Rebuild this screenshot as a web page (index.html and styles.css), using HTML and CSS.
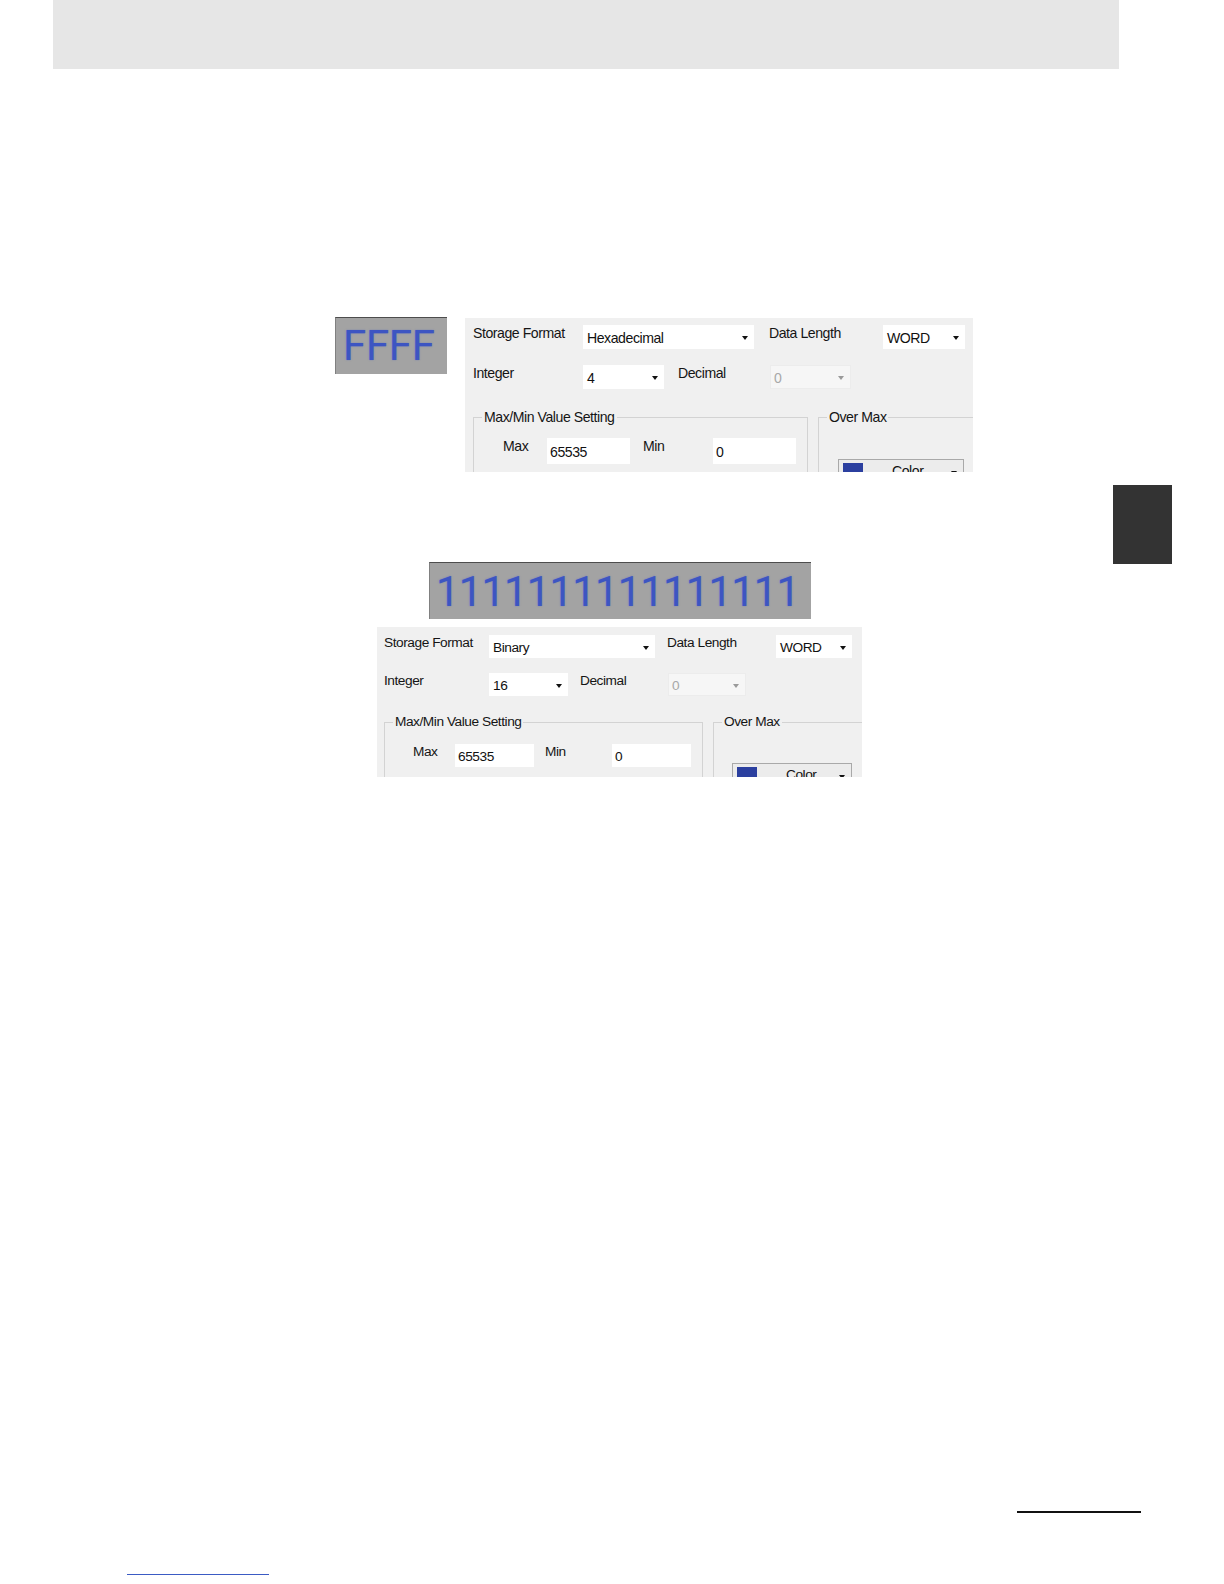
FILE: index.html
```html
<!DOCTYPE html>
<html>
<head>
<meta charset="utf-8">
<link rel="stylesheet" href="styles.css">
</head>
<body>
<div class="page">
  <div class="header"></div>

  <div class="fig fig1">
    <div class="display disp-hex">FFFF</div>
    <div class="panel p1">
      <div class="row r1">
        <span class="lbl la">Storage Format</span>
        <div class="sel sa"><span>Hexadecimal</span><i class="caret"></i></div>
        <span class="lbl lc">Data Length</span>
        <div class="sel sd"><span>WORD</span><i class="caret"></i></div>
      </div>
      <div class="row r2">
        <span class="lbl la">Integer</span>
        <div class="sel si"><span>4</span><i class="caret"></i></div>
        <span class="lbl ld">Decimal</span>
        <div class="sel sdec disabled"><span>0</span><i class="caret"></i></div>
      </div>
      <div class="groups">
        <fieldset class="grp gmm">
          <legend>Max/Min Value Setting</legend>
          <div class="inrow">
            <span class="lbl lmax">Max</span>
            <div class="inp">65535</div>
            <span class="lbl lmin">Min</span>
            <div class="inp">0</div>
          </div>
        </fieldset>
        <fieldset class="grp gov">
          <legend>Over Max</legend>
          <div class="ovbody">
            <div class="cbtn"><i class="sw"></i><span class="ctext">Color</span><i class="caret"></i></div>
          </div>
        </fieldset>
      </div>
    </div>
  </div>

  <div class="fig fig2">
    <div class="display disp-bin">1111111111111111</div>
    <div class="panel p2">
      <div class="row r1">
        <span class="lbl la">Storage Format</span>
        <div class="sel sa"><span>Binary</span><i class="caret"></i></div>
        <span class="lbl lc">Data Length</span>
        <div class="sel sd"><span>WORD</span><i class="caret"></i></div>
      </div>
      <div class="row r2">
        <span class="lbl la">Integer</span>
        <div class="sel si"><span>16</span><i class="caret"></i></div>
        <span class="lbl ld">Decimal</span>
        <div class="sel sdec disabled"><span>0</span><i class="caret"></i></div>
      </div>
      <div class="groups">
        <fieldset class="grp gmm">
          <legend>Max/Min Value Setting</legend>
          <div class="inrow">
            <span class="lbl lmax">Max</span>
            <div class="inp">65535</div>
            <span class="lbl lmin">Min</span>
            <div class="inp">0</div>
          </div>
        </fieldset>
        <fieldset class="grp gov">
          <legend>Over Max</legend>
          <div class="ovbody">
            <div class="cbtn"><i class="sw"></i><span class="ctext">Color</span><i class="caret"></i></div>
          </div>
        </fieldset>
      </div>
    </div>
  </div>

  <div class="foot-rule"></div>
  <div class="foot-link"></div>

  <div class="side-tab"></div>
</div>
</body>
</html>
```

FILE: styles.css
```css
* { box-sizing: border-box; }
html, body { margin: 0; padding: 0; background: #fff; }
body { font-family: "Liberation Sans", Arial, sans-serif; color: #111; }

.page { position: relative; width: 1224px; height: 1584px; overflow: hidden; }

.header {
  margin-left: 53px;
  width: 1066px;
  height: 69px;
  background: #e6e6e6;
}

.fig { display: flex; align-items: flex-start; }
.fig1 { margin-top: 248px; padding-left: 335px; gap: 18px; }
.fig2 { margin-top: 90px; flex-direction: column; align-items: flex-start; }

.display {
  background: #a3a3a3;
  border-top: 1px solid #4d4d4d;
  border-left: 1px solid #808080;
  color: #3d55c2;
  font-family: Roboto, "Liberation Sans", Arial, sans-serif;
  white-space: nowrap;
  text-shadow: 0 0 1.5px rgba(60, 85, 200, 0.55);
}
.disp-hex {
  width: 112px; height: 57px;
  font-size: 42px; line-height: 56px;
  letter-spacing: -0.3px;
  padding-left: 7px;
}
.disp-bin {
  margin-left: 429px;
  width: 382px; height: 57px;
  font-size: 42px; line-height: 57px;
  letter-spacing: -0.9px;
  padding-left: 6px;
}

/* ---------- dialog panel ---------- */
.panel {
  background: #f0f0f0;
  overflow: hidden;
  font-size: var(--fs);
  letter-spacing: var(--ls);
  padding-left: var(--pad);
  padding-top: var(--pt);
}
.p1 {
  margin-top: 1px;
  width: 508px; height: 154px;
  --fs: 14.1px; --ls: -0.45px; --pad: 8px; --pt: 7px;
  --la: 110px; --sa: 171px; --g: 15px; --lc: 114px; --sd: 82px;
  --si: 81px; --g2: 14px; --ld: 92px; --sdec: 81px;
  --h: 24px; --rg: 16px; --gtop: 20px;
  --gw: 335px; --gpl: 29px; --gpt: 13px; --lmax: 44px; --iw: 83px; --ig: 13px; --lmin: 70px; --ih: 26px;
  --gg: 10px; --cbl: 19px; --cbt: 34px; --cbw: 126px;
}
.p2 {
  margin-top: 8px; margin-left: 377px;
  width: 485px; height: 150px;
  --fs: 13.7px; --ls: -0.45px; --pad: 7px; --pt: 8px;
  --la: 105px; --sa: 166px; --g: 12px; --lc: 109px; --sd: 76px;
  --si: 79px; --g2: 12px; --ld: 88px; --sdec: 78px;
  --h: 23px; --rg: 15px; --gtop: 18px;
  --gw: 319px; --gpl: 28px; --gpt: 14px; --lmax: 42px; --iw: 79px; --ig: 11px; --lmin: 67px; --ih: 23px;
  --gg: 10px; --cbl: 18px; --cbt: 33px; --cbw: 120px;
}

.row { display: flex; align-items: flex-start; height: var(--h); }
.r2 { margin-top: var(--rg); }

.lbl { display: block; line-height: 16px; white-space: nowrap; color: #151515; }
.la { width: var(--la); }
.lc { width: var(--lc); margin-left: var(--g); }
.ld { width: var(--ld); margin-left: var(--g2); }

.sel {
  position: relative;
  height: var(--h);
  background: #fff;
  line-height: var(--h);
  padding: 1px 0 0 4px;
  white-space: nowrap;
}
.sa { width: var(--sa); }
.sd { width: var(--sd); }
.si { width: var(--si); }
.sdec { width: var(--sdec); }
.sel.disabled { background: #f6f6f6; color: #a8a8a8; border: 1px solid #ececec; padding-left: 3px; padding-top: 0; }

.caret {
  position: absolute;
  right: 6px;
  top: 50%;
  margin-top: -1px;
  width: 0; height: 0;
  border-top: 4px solid #111;
  border-left: 3.5px solid transparent;
  border-right: 3.5px solid transparent;
}
.sel.disabled .caret { border-top-color: #9a9a9a; }

.groups { display: flex; align-items: flex-start; gap: var(--gg); margin-top: var(--gtop); }

.grp {
  margin: 0;
  border: 1px solid #d3d3d3;
  padding: 0 0 40px 0;
  min-width: 0;
  flex-shrink: 0;
}
.grp legend {
  margin-left: 8px;
  padding: 0 2px;
  line-height: 16px;
  color: #151515;
}
.gmm { width: var(--gw); }
.gov { width: 240px; }

.inrow { display: flex; align-items: flex-start; padding: var(--gpt) 0 0 var(--gpl); }
.lmax { width: var(--lmax); }
.lmin { width: var(--lmin); margin-left: var(--ig); }
.inp {
  width: var(--iw);
  height: var(--ih);
  background: #fff;
  line-height: var(--ih);
  padding: 1px 0 0 3px;
}

.ovbody { padding: var(--cbt) 0 0 var(--cbl); }
.cbtn {
  position: relative;
  width: var(--cbw);
  height: 24px;
  border: 1px solid #a9a9a9;
  background: #ececec;
  display: flex;
  align-items: flex-start;
  padding: 3px 0 0 4px;
}
.sw { display: block; width: 20px; height: 16px; background: #2b3f9f; }
.ctext { margin-left: 29px; line-height: 16px; }
.cbtn .caret { top: 12px; }

/* ---------- footer marks ---------- */
.foot-rule {
  margin-top: 734px;
  margin-left: 1017px;
  width: 124px;
  height: 2px;
  background: #111;
}
.foot-link {
  margin-top: 61px;
  margin-left: 127px;
  width: 142px;
  height: 1px;
  background: #3b5bc4;
}

.side-tab {
  position: absolute;
  left: 1113px;
  top: 485px;
  width: 59px;
  height: 79px;
  background: #333;
}
```
